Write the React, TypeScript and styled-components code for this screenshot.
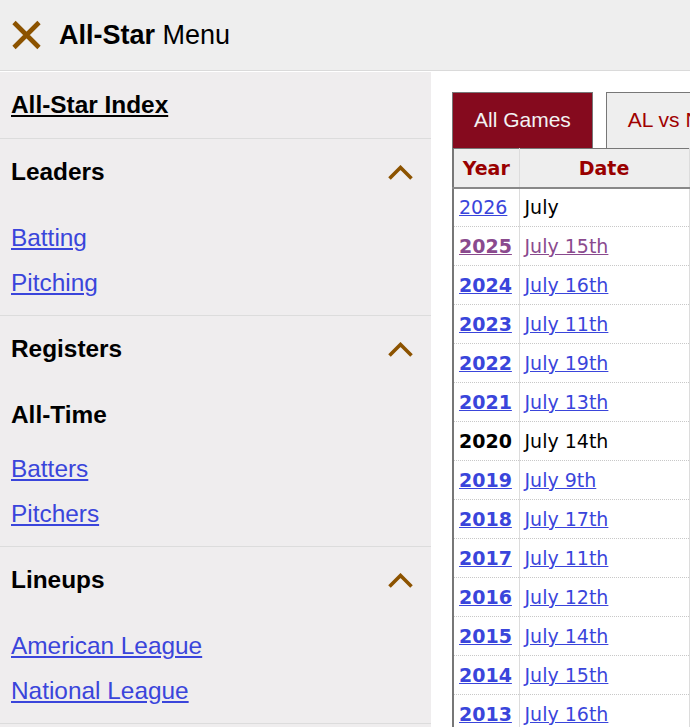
import styled, { createGlobalStyle } from 'styled-components';

const GlobalStyle = createGlobalStyle`
  html, body {
    margin: 0;
    padding: 0;
    background: #fff;
    font-family: "Liberation Sans", Arial, sans-serif;
  }
`;

const brown = '#8c5300';
const linkBlue = '#3a45db';
const visited = '#8a4a8e';
const maroon = '#850a1e';

const Page = styled.div`
  width: 690px;
  height: 727px;
  overflow: hidden;
`;

const Header = styled.header`
  display: flex;
  align-items: center;
  gap: 17px;
  height: 70px;
  padding-left: 11px;
  background: #eeeeee;
  border-bottom: 1px solid #dadada;
`;

const Title = styled.h1`
  margin: 0;
  font-size: 27px;
  font-weight: 400;
  color: #000;

  strong {
    font-weight: 700;
  }
`;

const Body = styled.div`
  display: grid;
  grid-template-columns: 431px 1fr;
  margin-top: 1px;
  height: 656px;
`;

const Sidebar = styled.nav`
  background: #efedee;
  overflow: hidden;
`;

const IndexRow = styled.div`
  display: flex;
  align-items: center;
  height: 66px;
  padding-left: 11px;
  border-bottom: 1px solid #dcdcdc;

  a {
    color: #000;
    font-weight: 700;
    font-size: 24.4px;
    text-decoration: underline;
  }
`;

const Section = styled.section`
  border-bottom: 1px solid #dcdcdc;
`;

const SectionHead = styled.div`
  display: flex;
  align-items: center;
  justify-content: space-between;
  height: 66px;
  padding: 0 18px 0 11px;
  font-size: 24.4px;
  font-weight: 700;
  color: #000;
`;

const LinkList = styled.div`
  padding: 10px 0 10px 11px;
`;

const SubHead = styled.div`
  height: 45px;
  line-height: 45px;
  margin-bottom: 9px;
  font-size: 24.4px;
  font-weight: 700;
  color: #000;
`;

const NavLink = styled.a`
  display: block;
  height: 45px;
  line-height: 45px;
  font-size: 24.4px;
  color: ${linkBlue};
  text-decoration: underline;
  width: fit-content;
`;

const Main = styled.main`
  padding: 20px 0 0 21px;
  overflow: hidden;
`;

const Tabs = styled.div`
  display: flex;
  gap: 13px;
`;

const Tab = styled.div<{ $active?: boolean }>`
  flex-shrink: 0;
  display: flex;
  align-items: center;
  height: 56px;
  padding: 0 21px 2px;
  border: 1px solid #777;
  border-bottom: none;
  font-size: 21px;
  line-height: 1;
  box-sizing: border-box;
  white-space: nowrap;
  background: ${({ $active }) => ($active ? maroon : '#eeeeee')};
  color: ${({ $active }) => ($active ? '#f2f2f2' : '#a00000')};
`;

const Table = styled.table`
  table-layout: fixed;
  width: 420px;
  border-collapse: collapse;
  border-top: 1px solid #777;
  border-left: 2px solid #777;
  font-family: "DejaVu Sans", Verdana, sans-serif;
  font-size: 19px;
  white-space: nowrap;
`;

const Th = styled.th`
  height: 39px;
  padding: 0 5px;
  box-sizing: border-box;
  background: #eeeeee;
  color: #990000;
  font-weight: 700;
  text-align: center;
  overflow: hidden;
  border-bottom: 2px solid #888;
  border-right: 1px solid #dcdcdc;
`;

const Td = styled.td<{ $bold?: boolean }>`
  height: 39px;
  padding: 0 5px;
  box-sizing: border-box;
  text-align: left;
  overflow: hidden;
  font-weight: ${({ $bold }) => ($bold ? 700 : 400)};
  color: #000;
  border-bottom: 1px dotted #c8c8c8;
  border-right: 1px solid #dcdcdc;
`;

const CellLink = styled.a<{ $visited?: boolean }>`
  color: ${({ $visited }) => ($visited ? visited : linkBlue)};
  text-decoration: underline;
`;

const CloseIcon = () => (
  <svg width="31" height="30" viewBox="0 0 31 30">
    <path d="M3 2.5 L28 27.5 M28 2.5 L3 27.5" stroke={brown} strokeWidth="4.6" fill="none" />
  </svg>
);

const Chevron = () => (
  <svg width="25" height="15" viewBox="0 0 25 15">
    <polyline points="1.5,13.5 12.5,2.5 23.5,13.5" stroke={brown} strokeWidth="3.6" fill="none" />
  </svg>
);

type Game = { year: string; date: string; yearLink: boolean; dateLink: boolean; bold: boolean; visited?: boolean };

const games: Game[] = [
  { year: '2026', date: 'July', yearLink: true, dateLink: false, bold: false },
  { year: '2025', date: 'July 15th', yearLink: true, dateLink: true, bold: true, visited: true },
  { year: '2024', date: 'July 16th', yearLink: true, dateLink: true, bold: true },
  { year: '2023', date: 'July 11th', yearLink: true, dateLink: true, bold: true },
  { year: '2022', date: 'July 19th', yearLink: true, dateLink: true, bold: true },
  { year: '2021', date: 'July 13th', yearLink: true, dateLink: true, bold: true },
  { year: '2020', date: 'July 14th', yearLink: false, dateLink: false, bold: true },
  { year: '2019', date: 'July 9th', yearLink: true, dateLink: true, bold: true },
  { year: '2018', date: 'July 17th', yearLink: true, dateLink: true, bold: true },
  { year: '2017', date: 'July 11th', yearLink: true, dateLink: true, bold: true },
  { year: '2016', date: 'July 12th', yearLink: true, dateLink: true, bold: true },
  { year: '2015', date: 'July 14th', yearLink: true, dateLink: true, bold: true },
  { year: '2014', date: 'July 15th', yearLink: true, dateLink: true, bold: true },
  { year: '2013', date: 'July 16th', yearLink: true, dateLink: true, bold: true },
  { year: '2012', date: 'July 10th', yearLink: true, dateLink: true, bold: true },
];

export default function App() {
  return (
    <Page>
      <GlobalStyle />
      <Header>
        <CloseIcon />
        <Title>
          <strong>All-Star</strong> Menu
        </Title>
      </Header>
      <Body>
        <Sidebar>
          <IndexRow>
            <a href="#">All-Star Index</a>
          </IndexRow>
          <Section>
            <SectionHead>
              Leaders <Chevron />
            </SectionHead>
            <LinkList>
              <NavLink href="#">Batting</NavLink>
              <NavLink href="#">Pitching</NavLink>
            </LinkList>
          </Section>
          <Section>
            <SectionHead>
              Registers <Chevron />
            </SectionHead>
            <LinkList>
              <SubHead>All-Time</SubHead>
              <NavLink href="#">Batters</NavLink>
              <NavLink href="#">Pitchers</NavLink>
            </LinkList>
          </Section>
          <Section>
            <SectionHead>
              Lineups <Chevron />
            </SectionHead>
            <LinkList>
              <NavLink href="#">American League</NavLink>
              <NavLink href="#">National League</NavLink>
            </LinkList>
          </Section>
        </Sidebar>
        <Main>
          <Tabs>
            <Tab $active>All Games</Tab>
            <Tab>AL vs NL</Tab>
          </Tabs>
          <Table>
            <colgroup>
              <col style={{ width: 66 }} />
              <col style={{ width: 170 }} />
              <col />
            </colgroup>
            <thead>
              <tr>
                <Th>Year</Th>
                <Th>Date</Th>
                <Th>Score</Th>
              </tr>
            </thead>
            <tbody>
              {games.map((g) => (
                <tr key={g.year}>
                  <Td $bold={g.bold}>
                    {g.yearLink ? (
                      <CellLink href="#" $visited={g.visited}>
                        {g.year}
                      </CellLink>
                    ) : (
                      g.year
                    )}
                  </Td>
                  <Td>
                    {g.dateLink ? (
                      <CellLink href="#" $visited={g.visited}>
                        {g.date}
                      </CellLink>
                    ) : (
                      g.date
                    )}
                  </Td>
                  <Td />
                </tr>
              ))}
            </tbody>
          </Table>
        </Main>
      </Body>
    </Page>
  );
}
